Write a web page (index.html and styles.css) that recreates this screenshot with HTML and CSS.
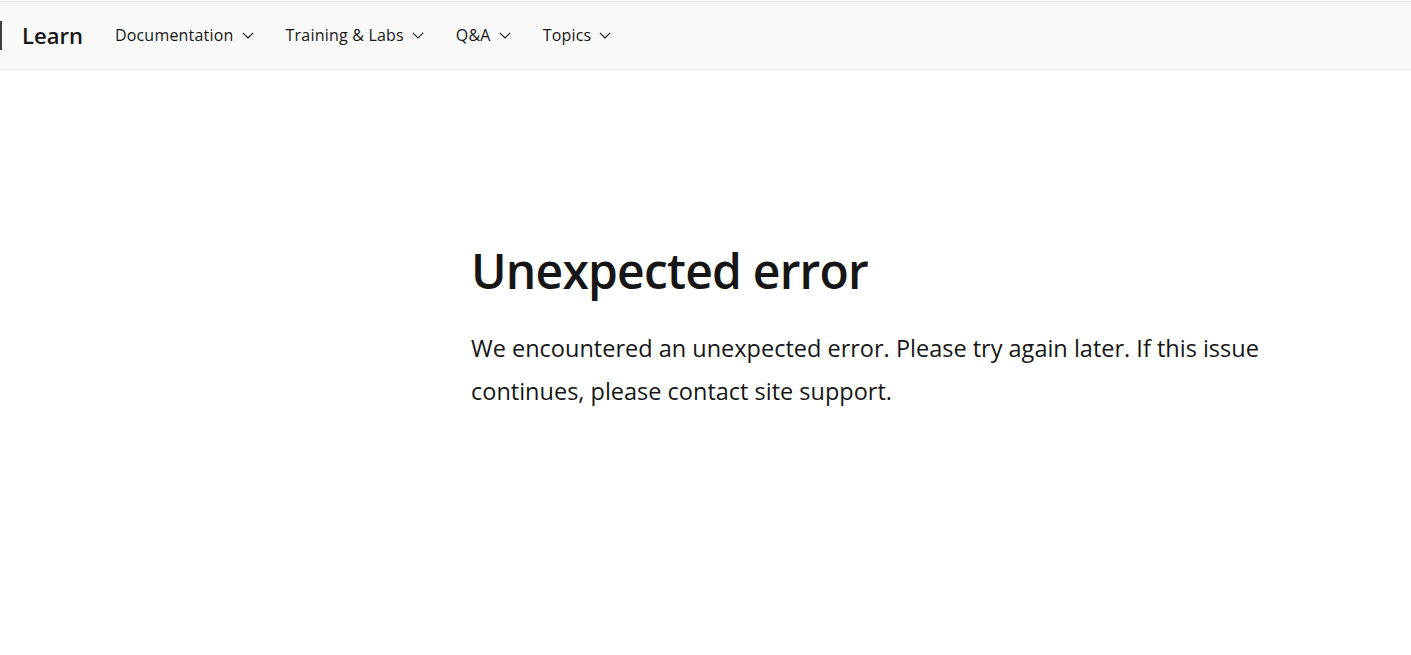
FILE: index.html
```html
<!DOCTYPE html>
<html lang="en">
<head>
<meta charset="utf-8">
<title>Unexpected error</title>
<link rel="stylesheet" href="styles.css">
</head>
<body>
<header class="site-header">
  <span class="brand-divider"></span>
  <a class="brand" href="#">Learn</a>
  <nav class="nav">
    <a class="nav-item" href="#">Documentation<svg class="chev" viewBox="0 0 12 7" width="12" height="7"><path d="M0.8 0.8 L6 6 L11.2 0.8" fill="none" stroke="currentColor" stroke-width="1.1"/></svg></a>
    <a class="nav-item" href="#">Training &amp; Labs<svg class="chev" viewBox="0 0 12 7" width="12" height="7"><path d="M0.8 0.8 L6 6 L11.2 0.8" fill="none" stroke="currentColor" stroke-width="1.1"/></svg></a>
    <a class="nav-item" href="#">Q&amp;A<svg class="chev" viewBox="0 0 12 7" width="12" height="7"><path d="M0.8 0.8 L6 6 L11.2 0.8" fill="none" stroke="currentColor" stroke-width="1.1"/></svg></a>
    <a class="nav-item" href="#">Topics<svg class="chev" viewBox="0 0 12 7" width="12" height="7"><path d="M0.8 0.8 L6 6 L11.2 0.8" fill="none" stroke="currentColor" stroke-width="1.1"/></svg></a>
  </nav>
</header>
<main class="content">
  <h1 class="title">Unexpected error</h1>
  <p class="lead">We encountered an unexpected error. Please try again later. If this issue continues, please contact site support.</p>
</main>
</body>
</html>
```
FILE: styles.css
```css
html, body {
  margin: 0;
  padding: 0;
  background: #ffffff;
}
body {
  font-family: "Open Sans", "Noto Sans", sans-serif;
  color: #161616;
}
.site-header {
  margin-top: 1px;
  height: 67px;
  border-top: 1px solid #e3e3e3;
  border-bottom: 1px solid #e3e3e3;
  background: #f9f9f9;
  display: flex;
  align-items: center;
}
.brand-divider {
  width: 2px;
  height: 29px;
  background: #404040;
  flex: none;
}
.brand {
  margin-left: 20px;
  font-size: 22px;
  font-weight: 600;
  color: #161616;
  text-decoration: none;
  margin-top: -1px;
}
.nav {
  display: flex;
  align-items: center;
  margin-left: 16px;
  margin-top: -2px;
}
.nav-item {
  display: flex;
  align-items: center;
  gap: 8px;
  padding: 0 16px;
  font-size: 16px;
  letter-spacing: 0.2px;
  color: #161616;
  text-decoration: none;
}
.chev {
  flex: none;
  margin-top: 2px;
}
.content {
  margin-left: 471px;
  max-width: 820px;
  padding-top: 170px;
}
.title {
  margin: 0;
  font-size: 48px;
  font-weight: 600;
  line-height: 1.3;
  letter-spacing: -0.8px;
}
.lead {
  margin: 25px 0 0;
  font-size: 23.5px;
  line-height: 43px;
}
```
